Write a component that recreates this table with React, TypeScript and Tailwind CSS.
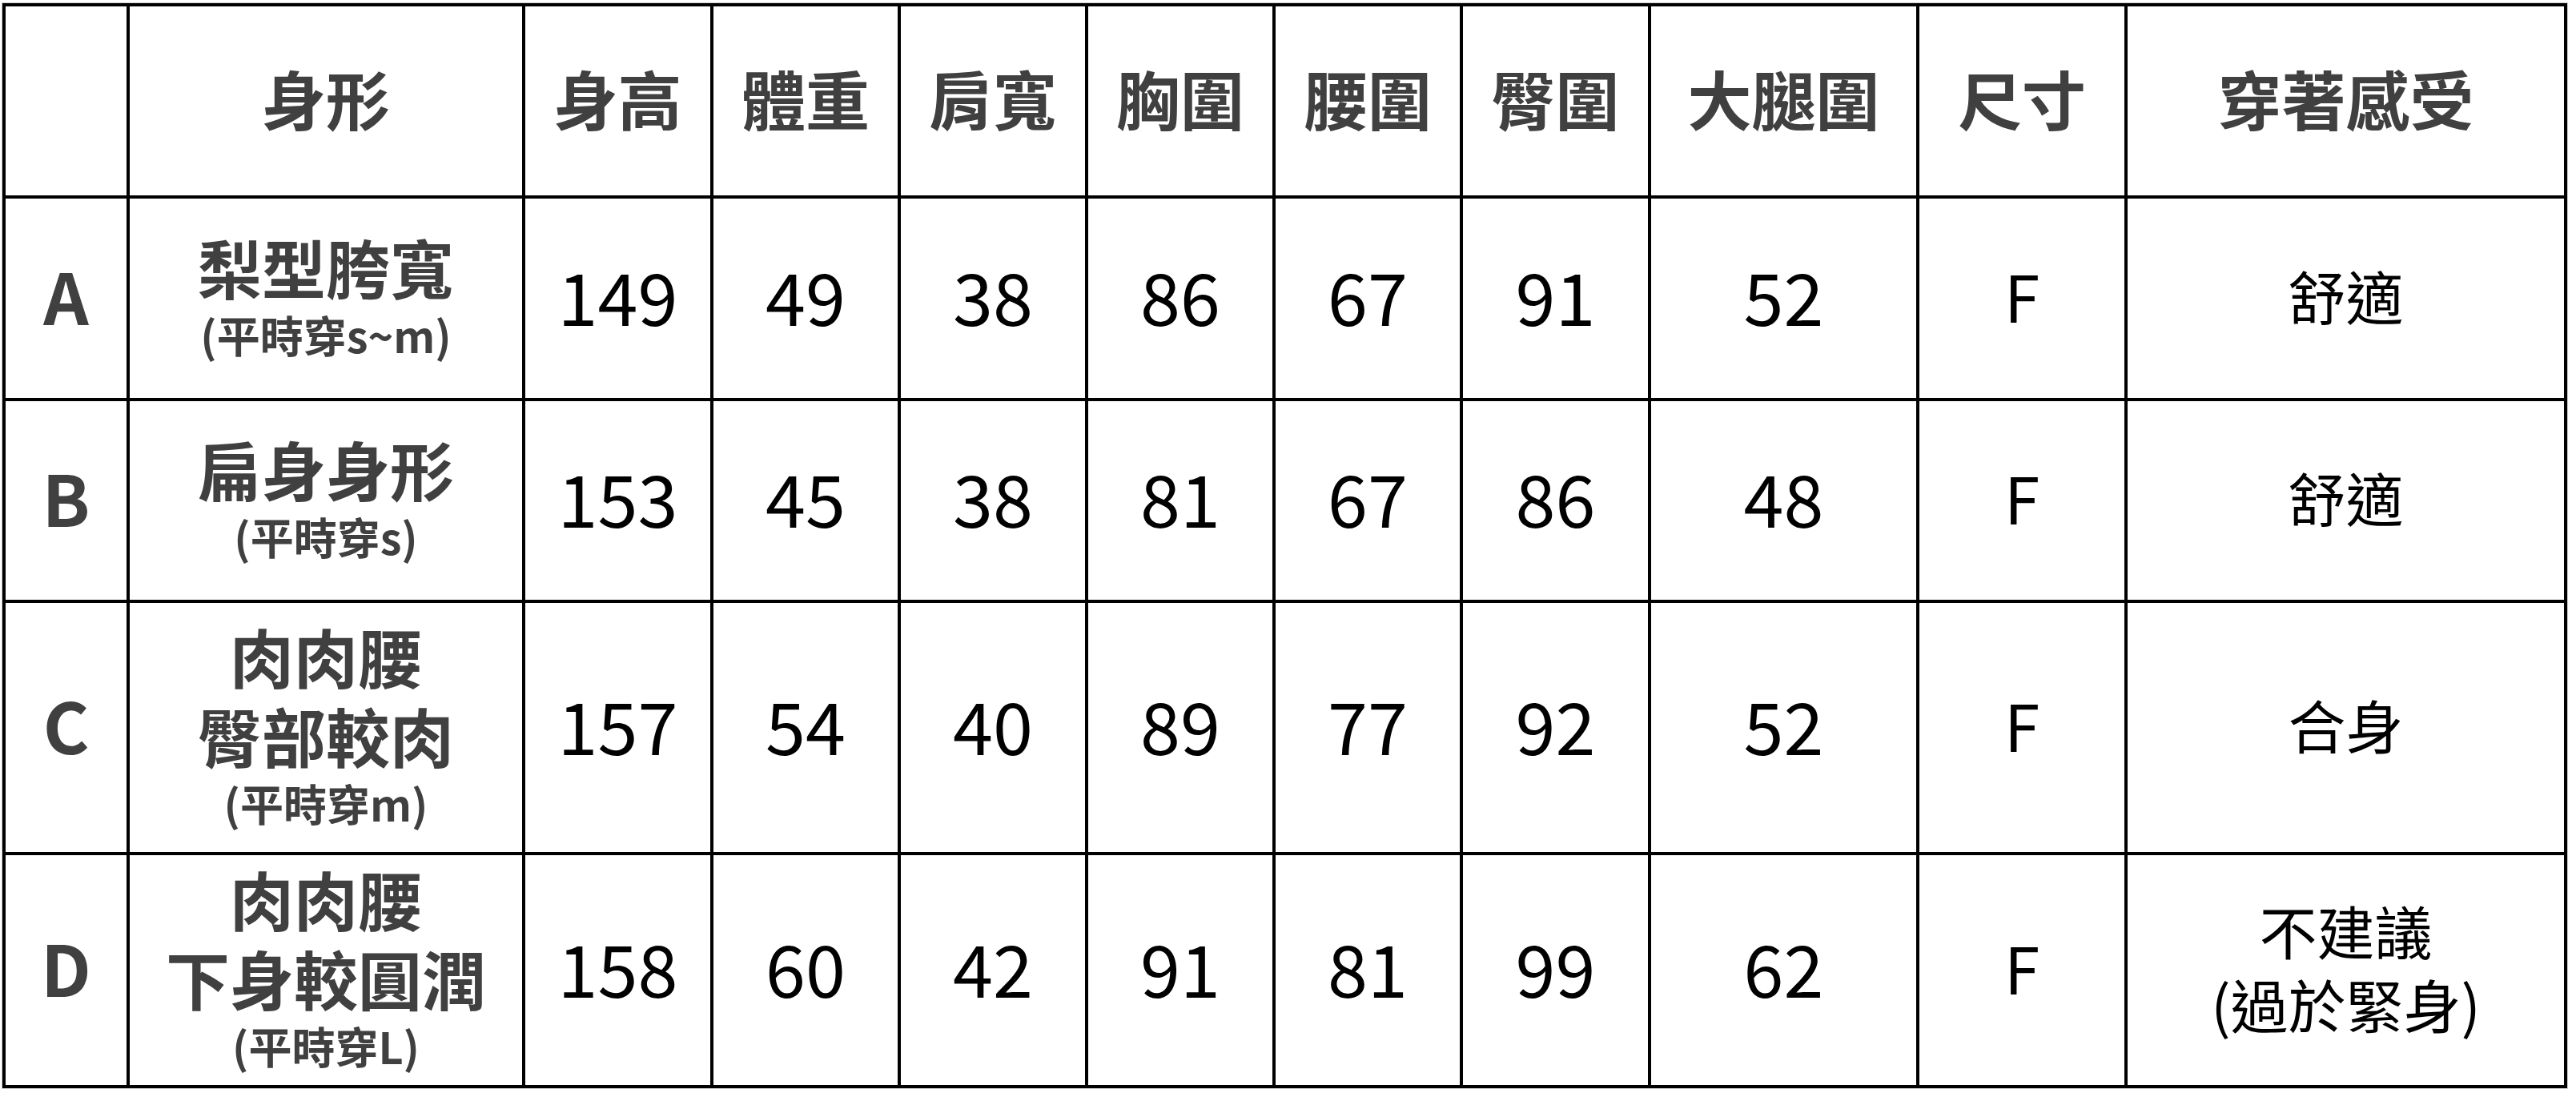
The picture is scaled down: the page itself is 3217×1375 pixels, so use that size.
import React from 'react';

const headers = ['', '身形', '身高', '體重', '肩寬', '胸圍', '腰圍', '臀圍', '大腿圍', '尺寸', '穿著感受'];

interface Row {
    label: string;
    shape: string[];
    note: string;
    values: number[];
    size: string;
    feel: string[];
}

const rows: Row[] = [
    { label: 'A', shape: ['梨型胯寬'], note: '(平時穿s~m)', values: [149, 49, 38, 86, 67, 91, 52], size: 'F', feel: ['舒適'] },
    { label: 'B', shape: ['扁身身形'], note: '(平時穿s)', values: [153, 45, 38, 81, 67, 86, 48], size: 'F', feel: ['舒適'] },
    { label: 'C', shape: ['肉肉腰', '臀部較肉'], note: '(平時穿m)', values: [157, 54, 40, 89, 77, 92, 52], size: 'F', feel: ['合身'] },
    { label: 'D', shape: ['肉肉腰', '下身較圓潤'], note: '(平時穿L)', values: [158, 60, 42, 91, 81, 99, 62], size: 'F', feel: ['不建議', '(過於緊身)'] },
];

function Cell({ children }: { children?: React.ReactNode }) {
    // glyphs sit a little low in the line box, so nudge content up with bottom padding
    return <div className="bg-white flex flex-col items-center justify-center text-center pb-[10px]">{children}</div>;
}

export default function App() {
    return (
        <div className="w-[3217px] h-[1375px] bg-white pt-[4px] pl-[3px] font-['Noto_Sans_CJK_TC','Noto_Sans',sans-serif]">
            <div className="grid w-fit grid-cols-[151px_490px_231px_230px_230px_230px_230px_231px_331px_256px_545px] grid-rows-[236px_249px_248px_311px_287px] gap-[4px] p-[4px] bg-black ring-1 ring-[#cfcfcf]">
                {/* header */}
                {headers.map((h, i) => (
                    <Cell key={i}>
                        <span className="text-[80px] leading-none font-bold text-[#404040]">{h}</span>
                    </Cell>
                ))}

                {/* body rows */}
                {rows.map((r) => (
                    <React.Fragment key={r.label}>
                        <Cell>
                            <span className="text-[88px] leading-none font-bold text-[#404040]">{r.label}</span>
                        </Cell>
                        <Cell>
                            {r.shape.map((s) => (
                                <span key={s} className="block text-[80px] leading-[99px] font-bold text-[#404040]">
                                    {s}
                                </span>
                            ))}
                            <span className="block text-[54px] leading-[71px] font-bold text-[#404040]">{r.note}</span>
                        </Cell>
                        {r.values.map((v, i) => (
                            <Cell key={i}>
                                <span className="text-[90px] leading-none text-black">{v}</span>
                            </Cell>
                        ))}
                        <Cell>
                            <span className="text-[80px] leading-none text-black">{r.size}</span>
                        </Cell>
                        <Cell>
                            {r.feel.map((f) => (
                                <span key={f} className="block text-[72px] leading-[92px] text-black">
                                    {f}
                                </span>
                            ))}
                        </Cell>
                    </React.Fragment>
                ))}
            </div>
        </div>
    );
}
